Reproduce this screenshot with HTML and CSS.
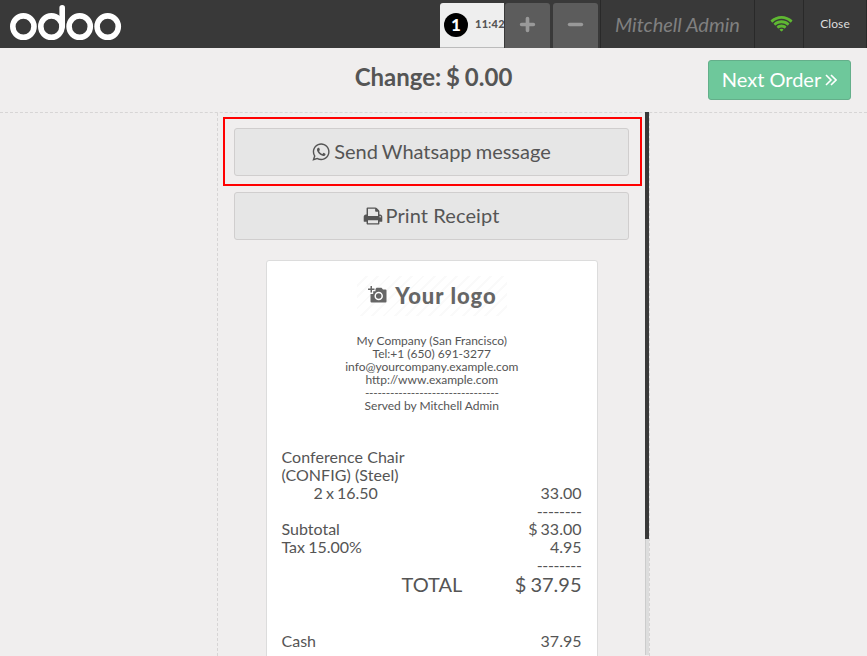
FILE: index.html
```
<!DOCTYPE html>
<html lang="en">
<head>
<meta charset="utf-8">
<title>Odoo Point of Sale</title>
<link rel="stylesheet" href="styles.css">
</head>
<body>
<header class="topbar">
  <svg class="brand" viewBox="0 0 112 36" fill="none" stroke="#fff" stroke-width="5.6" stroke-linecap="round" role="img" aria-label="odoo">
    <ellipse cx="13.4" cy="21.6" rx="10.6" ry="10.7"/>
    <ellipse cx="41.4" cy="21.6" rx="10.6" ry="10.7"/>
    <path d="M52.2 2.8V21.6"/>
    <ellipse cx="69.7" cy="21.6" rx="10.6" ry="10.7"/>
    <ellipse cx="97.7" cy="21.6" rx="10.6" ry="10.7"/>
  </svg>
  <nav class="orders">
    <div class="order-tab"><span class="order-num">1</span><span class="order-time">11:42</span></div>
    <button class="order-btn"><svg viewBox="0 0 14 14"><path d="M7 1.500v11M1.500 7h11"/></svg></button>
    <button class="order-btn"><svg viewBox="0 0 14 14"><path d="M1.500 7h11"/></svg></button>
  </nav>
  <div class="username">Mitchell Admin</div>
  <div class="status"><svg viewBox="0 0 2048 1792"><path transform="translate(-96 0)" d="M1120 1395q-20 0-93-73.500t-73-93.500q0-32 62.500-54t103.500-22 103.500 22 62.500 54q0 20-73 93.500t-93 73.500zm270-271q-2 0-40-25t-101.500-50-128.500-25-128.500 25-101 50-40.500 25q-18 0-93.500-75t-75.500-93q0-13 10-23 78-77 196-121t233-44 233 44 196 121q10 10 10 23 0 18-75.500 93t-93.500 75zm273-272q-11 0-23-8-136-105-252-154.500t-268-49.500q-85 0-170.500 22t-149 53-113.500 62-79 53-31 22q-17 0-92-75t-75-93q0-12 10-22 132-132 320-205t380-73 380 73 320 205q10 10 10 22 0 18-75 93t-92 75zm271-271q-11 0-22-9-179-157-371.500-236.500t-420.500-79.500-420.500 79.500-371.500 236.500q-11 9-22 9-17 0-92.500-75t-75.500-93q0-13 10-23 187-186 445-288t527-102 527 102 445 288q10 10 10 23 0 18-75.500 93t-92.500 75z"/></svg></div>
  <div class="close">Close</div>
</header>
<section class="heading">
  <h1>Change: $ 0.00</h1>
  <button class="next"><span>Next Order</span><svg viewBox="0 0 12 12"><path d="M1 1l5 5-5 5M6 1l5 5-5 5"/></svg></button>
</section>
<main class="content">
  <div class="panel">
    <div class="scroll">
      <div class="highlight">
        <button class="action"><svg viewBox="0 0 1792 1792"><path d="M1113 974q13 0 97.500 44t89.500 53q2 5 2 15 0 33-17 76-16 39-71 65.500t-102 26.500q-57 0-190-62-98-45-170-118t-148-185q-72-107-71-194v-8q3-91 74-158 24-22 52-22 6 0 18 1.500t19 1.500q19 0 26.500 6.500t15.500 27.500q8 20 33 88t25 75q0 21-34.500 57.500t-34.500 46.500q0 7 5 15 34 73 102 137 56 53 151 101 12 7 22 7 15 0 54-48.500t52-48.500zm-203 530q127 0 243.500-50t200.500-134 134-200.500 50-243.500-50-243.500-134-200.500-200.500-134-243.500-50-243.500 50-200.500 134-134 200.500-50 243.500q0 203 120 368l-79 233 242-77q158 104 345 104zm0-1382q153 0 292.500 60t240.500 161 161 240.500 60 292.500-60 292.500-161 240.500-240.500 161-292.500 60q-195 0-365-94l-417 134 136-405q-108-178-108-389 0-153 60-292.500t161-240.500 240.500-161 292.500-60z"/></svg><span>Send Whatsapp message</span></button>
      </div>
      <button class="action print"><svg viewBox="0 0 1792 1792"><path d="M448 1536h896v-256h-896v256zm0-640h896v-384h-160q-40 0-68-28t-28-68v-160h-640v640zm1152 64q0-26-19-45t-45-19-45 19-19 45 19 45 45 19 45-19 19-45zm128 0v416q0 13-9.500 22.500t-22.500 9.500h-224v160q0 40-28 68t-68 28h-960q-40 0-68-28t-28-68v-160h-224q-13 0-22.500-9.500t-9.500-22.500v-416q0-79 56.500-135.500t135.500-56.500h64v-544q0-40 28-68t68-28h672q40 0 88 20t76 48l152 152q28 28 48 76t20 88v256h64q79 0 135.500 56.500t56.500 135.500z"/></svg><span>Print Receipt</span></button>
      <article class="receipt">
        <div class="logo">
          <svg viewBox="0 0 20 18"><path fill="#666" d="M2.500 0h1.500v2.500h2.500V4H4v2.500H2.500V4H0V2.500h2.500zM7.500 3l1-1.200h5L15 3.500h2.500q1 0 1 1V15.500q0 1-1 1H3.500q-1 0-1-1V8H5.200V5.200H7.500z"/><circle cx="10.700" cy="10" r="3.500" fill="#666" stroke="#fff" stroke-width="1.500"/></svg>
          <span>Your logo</span>
        </div>
        <div class="contact">
          <div>My Company (San Francisco)</div>
          <div>Tel:+1 (650) 691-3277</div>
          <div>info@yourcompany.example.com</div>
          <div>http://www.example.com</div>
          <div class="dashes">--------------------------------</div>
          <div>Served by Mitchell Admin</div>
        </div>
        <div class="lines">
          <div class="product">Conference Chair (CONFIG) (Steel)</div>
          <div class="row indent"><span>2 x 16.50</span><span>33.00</span></div>
          <div class="row rule"><span>--------</span></div>
          <div class="row"><span>Subtotal</span><span>$ 33.00</span></div>
          <div class="row"><span>Tax 15.00%</span><span>4.95</span></div>
          <div class="row rule"><span>--------</span></div>
          <div class="row total"><span>TOTAL</span><span>$ 37.95</span></div>
          <div class="row payment"><span>Cash</span><span>37.95</span></div>
        </div>
      </article>
    </div>
    <div class="track"><div class="thumb"></div></div>
  </div>
</main>
</body>
</html>
```

FILE: styles.css
```
* { box-sizing: border-box; }
body {
  margin: 0;
  width: 867px;
  height: 656px;
  overflow: hidden;
  display: flex;
  flex-direction: column;
  background: #f0eeee;
  color: #555;
  font-family: Lato, "Open Sans", sans-serif;
  font-size: 16px;
}
button { font-family: inherit; color: inherit; margin: 0; padding: 0; }
h1 { margin: 0; }

.topbar { flex: none; height: 48px; display: flex; background: #393939; }
.brand { width: 112px; height: 36px; margin: 5px 0 0 9.600px; }
.orders { display: flex; align-items: flex-end; margin-left: auto; height: 48px; }
.order-tab {
  width: 64px; height: 45px;
  display: flex; align-items: center;
  padding-left: 4px;
  background: #eee;
  border-bottom: 1px solid #bbb;
  border-radius: 3px 0 0 0;
  overflow: hidden;
}
.order-num {
  flex: none; width: 24px; height: 24px;
  border-radius: 50%;
  background: #000; color: #fff;
  font-size: 17px; font-weight: 900; line-height: 24px; text-align: center;
}
.order-time { margin: -3px 0 0 7px; font-size: 11px; font-weight: 900; letter-spacing: .3px; }
.order-btn {
  width: 45px; height: 45px;
  display: flex; align-items: center; justify-content: center;
  margin-left: 1px; padding-bottom: 2px;
  border: 0; border-radius: 3px 3px 0 0;
  background: #5c5c5c;
}
.order-btn + .order-btn { margin-left: 3px; }
.order-btn svg { width: 15px; height: 15px; fill: none; stroke: #999; stroke-width: 3.400; stroke-linecap: round; overflow: visible; }
.username {
  width: 154px; margin-left: 2px; padding-left: 14px;
  border-left: 1px solid #292929;
  color: #808080; font-size: 20px; font-style: italic; line-height: 48px; white-space: nowrap;
}
.status {
  width: 49px; display: flex; justify-content: center; align-items: center;
  border-left: 1px solid #292929;
}
.status svg { width: 23px; height: 20px; margin: 4px 0 0 4px; fill: #5fb832; overflow: visible; }
.close {
  width: 64px; border: solid #292929; border-width: 0 1px;
  color: #ddd; font-size: 12px; letter-spacing: .1px; line-height: 47px; text-align: center;
}

.heading {
  flex: none; height: 65px;
  display: grid; grid-template-columns: 1fr auto 1fr;
  border-bottom: 1px dashed #d7d5d5;
}
.heading h1 { grid-column: 2; font-size: 24px; font-weight: 700; line-height: 58px; word-spacing: -1px; }
.next {
  justify-self: end;
  width: 143px; height: 40px; margin: 12px 16px 0 0; padding-bottom: 2px;
  display: flex; align-items: center; justify-content: center; gap: 4px;
  border: 1px solid #64af8a; border-radius: 3px;
  background: #6ec89b; color: #fff;
  font-size: 20px;
}
.next svg { width: 12px; height: 12px; margin-top: 2px; fill: none; stroke: #fff; stroke-width: 1.600; }

.content { flex: 1; min-height: 0; display: flex; justify-content: center; }
.panel {
  width: 433px; height: 543px; display: flex;
  border: dashed #d7d5d5; border-width: 0 1px;
}
.scroll { width: 427px; overflow: hidden; }
.track { width: 4px; height: 100%; margin-top: -1px; background: #ddd; border-left: 1px solid #ccc; }
.thumb { width: 4px; height: 427px; margin-left: -1px; background: #393939; }
.highlight { width: 419px; height: 69px; margin: 4px 0 0 5px; padding: 9px; border: 2px solid #f00; }
.action {
  width: 395px; height: 48px; padding: 0 1px 2px 0;
  display: flex; align-items: center; justify-content: center; gap: 3px;
  border: 1px solid #d0cece; border-radius: 3px;
  background: #e6e6e6;
  font-size: 20px; word-spacing: -1px;
}
.action svg { width: 20px; height: 20px; margin-top: 2px; fill: #555; }
.print { margin: 6px 0 0 16px; padding: 0 0 2px 1px; }
.print svg { margin-left: -2px; }
.print span { word-spacing: 0; letter-spacing: .1px; }

.receipt {
  width: 332px; height: 430px; margin: 20px 0 0 48px; padding: 15px;
  border: 1px solid #dcdcdc; border-radius: 3px;
  background: #fff;
}
.logo {
  width: 150px; height: 40px; margin: 0 auto; padding: 0 0 2px 1px;
  display: flex; align-items: center; justify-content: center; gap: 7px;
  background: repeating-linear-gradient(135deg, #fff 0 6px, #fafafa 6px 8px);
  color: #666; font-size: 22px; font-weight: 900; letter-spacing: 1px;
}
.logo svg { width: 20px; height: 18px; }
.contact { margin-top: 18px; font-size: 12px; line-height: 13px; text-align: center; }
.contact div { margin-left: -.5px; }
.dashes { letter-spacing: -.28px; }
.lines { margin: 36px .5px 0 -.5px; line-height: 18px; }
.product { width: 150px; letter-spacing: .05px; }
.row { display: flex; justify-content: space-between; word-spacing: -1px; }
.indent { padding-left: 32px; }
.rule { justify-content: flex-end; letter-spacing: -.35px; }
.total { padding-left: 120px; font-size: 20px; line-height: 21px; }
.payment { margin-top: 37px; }
```
